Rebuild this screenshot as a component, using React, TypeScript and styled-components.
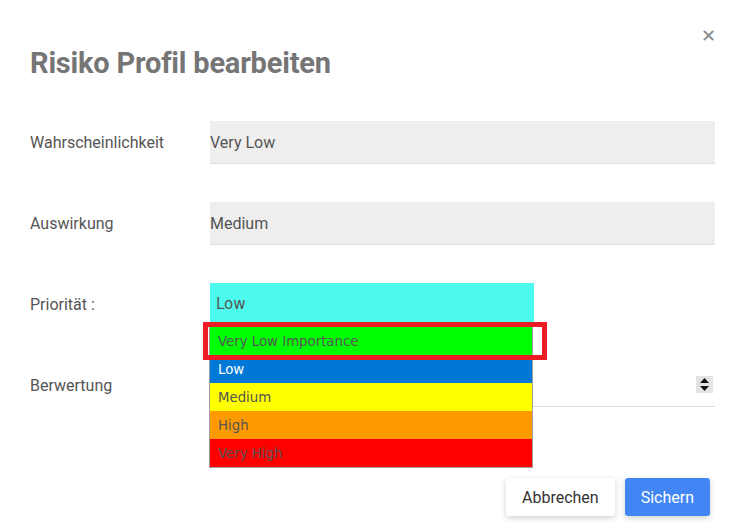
import React from 'react';
import styled, { createGlobalStyle } from 'styled-components';

const GlobalStyle = createGlobalStyle`
  html, body {
    margin: 0;
    padding: 0;
    background: #fff;
  }
  body {
    font-family: Roboto, "Liberation Sans", Arial, sans-serif;
    color: #555;
  }
`;

// LAYOUT
const Modal = styled.div`
  position: relative;
  width: 747px;
  height: 532px;
  box-sizing: border-box;
  padding: 48px 32px 0 30px;
  overflow: hidden;
`;

const Close = styled.button`
  position: absolute;
  top: 24px;
  right: 31px;
  border: 0;
  background: none;
  padding: 0;
  font-family: "DejaVu Sans", sans-serif;
  font-size: 18px;
  line-height: 24px;
  color: #888;
  cursor: pointer;
`;

const Title = styled.h1`
  margin: 0 0 43px;
  font-size: 29px;
  line-height: 30px;
  font-weight: 700;
  color: #757575;
  letter-spacing: -0.2px;
`;

const Form = styled.div`
  display: flex;
  flex-direction: column;
  gap: 38px;
`;

const Row = styled.div`
  display: flex;
  align-items: center;
  height: 43px;
`;

const Label = styled.div`
  width: 180px;
  flex: none;
  font-size: 16px;
  color: #555;
`;

const Field = styled.div<{ $filled?: boolean }>`
  flex: 1;
  height: 42px;
  display: flex;
  align-items: center;
  font-size: 16px;
  color: #555;
  background: ${(p) => (p.$filled ? '#eeeeee' : 'transparent')};
  border-bottom: 1px solid #dddddd;
`;

const SelectWrap = styled.div`
  position: relative;
  align-self: flex-start;
  width: 324px;
`;

const SelectBox = styled.div`
  height: 39px;
  box-sizing: border-box;
  padding: 3px 0 0 6px;
  background: #4cfbed;
  display: flex;
  align-items: center;
  font-family: "DejaVu Sans", Verdana, sans-serif;
  font-size: 15px;
  color: #555;
`;

const OptionList = styled.ul`
  position: absolute;
  z-index: 2;
  top: 43px;
  left: -1px;
  width: 322px;
  margin: 0;
  padding: 0;
  list-style: none;
  border: 1px solid #a0a0a0;
  background: #fff;
`;

const Option = styled.li<{ $bg: string; $fg: string }>`
  height: 28px;
  display: flex;
  align-items: center;
  padding-left: 8px;
  background: ${(p) => p.$bg};
  color: ${(p) => p.$fg};
  font-family: "DejaVu Sans", Verdana, sans-serif;
  font-size: 13.3px;
`;

// red annotation box drawn over the first option
const Highlight = styled.div`
  position: absolute;
  z-index: 3;
  top: 39px;
  left: -7px;
  width: 334px;
  height: 28px;
  border: 5px solid #ed1c24;
  pointer-events: none;
`;

const NumberField = styled(Field)`
  justify-content: flex-end;
  padding-right: 2px;
  align-items: flex-start;
  padding-top: 12px;
  box-sizing: border-box;
  height: 43px;
`;

const Spinner = styled.div`
  width: 17px;
  height: 17px;
  background: #e4e4e4;
  display: flex;
  flex-direction: column;
  align-items: center;
  justify-content: space-between;
  padding: 2px 0;
  box-sizing: border-box;
`;

const Footer = styled.div`
  display: flex;
  justify-content: flex-end;
  gap: 10px;
  margin-top: 71px;
  padding-right: 5px;
`;

const Button = styled.button<{ $primary?: boolean }>`
  height: 38px;
  padding: 0 16px;
  border: 0;
  border-radius: 3px;
  font-family: Roboto, sans-serif;
  font-size: 16px;
  background: ${(p) => (p.$primary ? '#4285f4' : '#ffffff')};
  color: ${(p) => (p.$primary ? '#ffffff' : '#333333')};
  box-shadow: 0 2px 6px rgba(0, 0, 0, 0.18);
  cursor: pointer;
`;

const options = [
  { label: 'Very Low Importance', bg: '#00ff00', fg: '#555' },
  { label: 'Low', bg: '#0078d7', fg: '#ffffff' },
  { label: 'Medium', bg: '#ffff00', fg: '#555' },
  { label: 'High', bg: '#ff9900', fg: '#555' },
  { label: 'Very High', bg: '#ff0000', fg: '#555' },
];

export default function App() {
  return (
    <>
      <GlobalStyle />
      <Modal>
        <Close aria-label="close">✕</Close>
        <Title>Risiko Profil bearbeiten</Title>
        <Form>
          <Row>
            <Label>Wahrscheinlichkeit</Label>
            <Field $filled>Very Low</Field>
          </Row>
          <Row>
            <Label>Auswirkung</Label>
            <Field $filled>Medium</Field>
          </Row>
          <Row>
            <Label>Priorität :</Label>
            <SelectWrap>
              <SelectBox>Low</SelectBox>
              <OptionList>
                {options.map((o) => (
                  <Option key={o.label} $bg={o.bg} $fg={o.fg}>
                    {o.label}
                  </Option>
                ))}
              </OptionList>
              <Highlight />
            </SelectWrap>
          </Row>
          <Row>
            <Label>Berwertung</Label>
            <NumberField>
              <Spinner>
                <svg width="9" height="5" viewBox="0 0 9 5">
                  <path d="M0 5 L4.5 0 L9 5 Z" fill="#111" />
                </svg>
                <svg width="9" height="5" viewBox="0 0 9 5">
                  <path d="M0 0 L4.5 5 L9 0 Z" fill="#111" />
                </svg>
              </Spinner>
            </NumberField>
          </Row>
        </Form>
        <Footer>
          <Button>Abbrechen</Button>
          <Button $primary>Sichern</Button>
        </Footer>
      </Modal>
    </>
  );
}
